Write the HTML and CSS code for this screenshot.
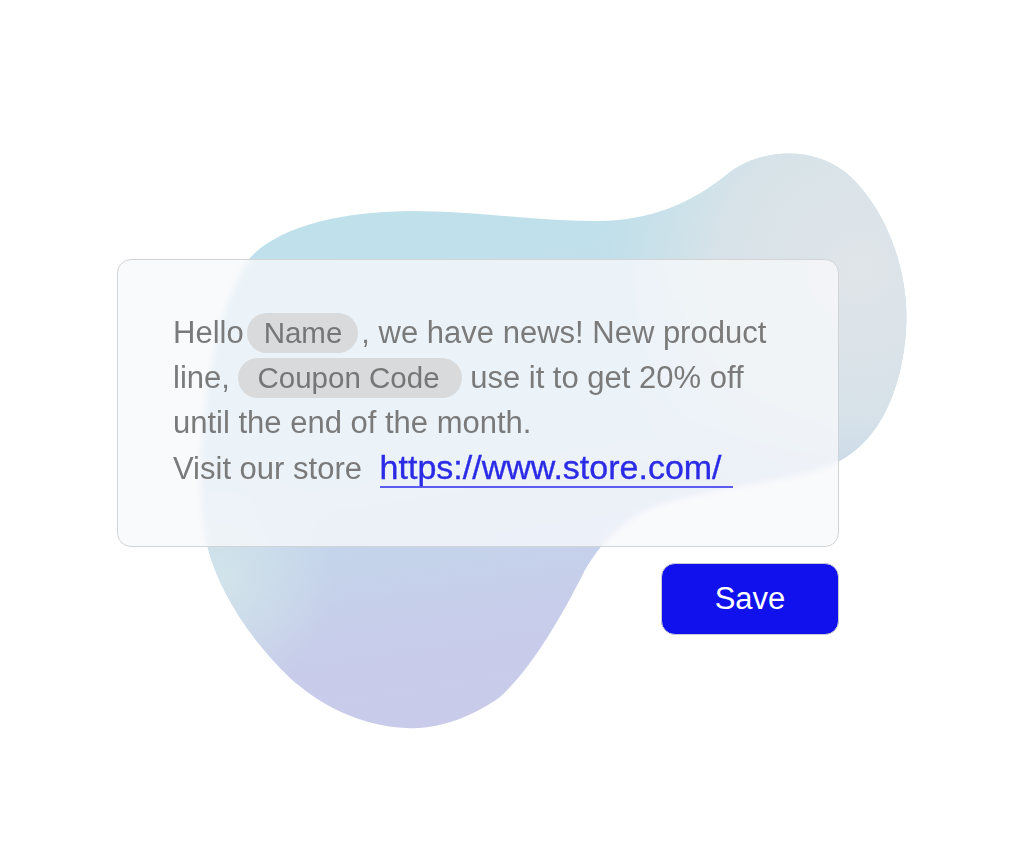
FILE: index.html
```html
<!DOCTYPE html>
<html lang="en">
<head>
<meta charset="utf-8">
<title>Message editor</title>
<link rel="stylesheet" href="styles.css">
</head>
<body>
<div class="stage">
  <svg class="blob" width="1024" height="855" viewBox="0 0 1024 855" aria-hidden="true">
    <defs>
      <linearGradient id="base" x1="0.35" y1="0" x2="0.55" y2="1">
        <stop offset="0" stop-color="#bfe2ea"/>
        <stop offset="0.5" stop-color="#c1dbeb"/>
        <stop offset="0.78" stop-color="#c7cdea"/>
        <stop offset="1" stop-color="#cacaea"/>
      </linearGradient>
      <radialGradient id="lobe" cx="860" cy="270" r="260" gradientUnits="userSpaceOnUse">
        <stop offset="0" stop-color="#e0e5e9" stop-opacity="1"/>
        <stop offset="0.55" stop-color="#dbe3e8" stop-opacity="0.85"/>
        <stop offset="1" stop-color="#d4e3e9" stop-opacity="0"/>
      </radialGradient>
      <radialGradient id="leftlow" cx="215" cy="580" r="120" gradientUnits="userSpaceOnUse">
        <stop offset="0" stop-color="#d2e4ea" stop-opacity="1"/>
        <stop offset="1" stop-color="#d2e4ea" stop-opacity="0"/>
      </radialGradient>
      <path id="shape" d="M 250 258 C 270 235, 320 212, 410 211 C 480 211, 540 222, 600 221 C 650 220, 690 205, 730 172 C 760 150, 810 145, 845 172 C 885 205, 910 270, 906 330 C 902 390, 880 440, 838 462 C 800 482, 720 485, 660 505 C 620 520, 600 545, 585 570 C 560 620, 530 670, 500 697 C 475 715, 440 730, 407 728 C 360 726, 320 705, 290 678 C 250 640, 218 590, 207 545 C 197 500, 200 420, 212 360 C 222 310, 235 280, 250 258 Z"/>
    </defs>
    <use href="#shape" fill="url(#base)"/>
    <use href="#shape" fill="url(#lobe)"/>
    <use href="#shape" fill="url(#leftlow)"/>
  </svg>

  <div class="content">
    <div class="card">
      <p class="msg">Hello<span class="tag tag-name">Name</span>, we have news! New product<br>line, <span class="tag tag-code">Coupon Code</span> use it to get 20% off<br>until the end of the month.<br>Visit our store <a class="link" href="#">https://www.store.com/</a></p>
    </div>
    <button class="save" type="button">Save</button>
  </div>
</div>
</body>
</html>
```

FILE: styles.css
```css
* {
  box-sizing: border-box;
}

html, body {
  margin: 0;
  padding: 0;
  background: #ffffff;
}

body {
  font-family: "Liberation Sans", Arial, sans-serif;
}

.stage {
  position: relative;
  width: 1024px;
  height: 855px;
  overflow: hidden;
}

.blob {
  position: absolute;
  left: 0;
  top: 0;
}

.content {
  position: relative;
  display: flex;
  flex-direction: column;
  align-items: flex-end;
  width: 839px;
  padding: 259px 0 0 117px;
}

.card {
  width: 722px;
  height: 288px;
  border: 1px solid #d2d3d5;
  border-radius: 14px;
  background: rgba(247, 249, 251, 0.78);
  backdrop-filter: blur(3px);
  padding: 50px 20px 0 55px;
}

.msg {
  margin: 0;
  font-size: 31px;
  line-height: 45px;
  color: #7a7a7a;
  white-space: nowrap;
}

.tag {
  display: inline-block;
  height: 40px;
  line-height: 40px;
  font-size: 29.5px;
  border-radius: 20px;
  background: #d8dadb;
  color: #767676;
}

.tag-name {
  margin-left: 3px;
  margin-right: 3px;
  padding: 0 16px 0 17px;
}

.tag-code {
  padding: 0 22px 0 19px;
}

.link {
  display: inline;
  margin-left: 9px;
  padding-right: 11px;
  font-size: 34px;
  color: #2b2be6;
  -webkit-text-stroke: 0.35px #2b2be6;
  text-decoration: none;
  border-bottom: 2px solid #5c5cf0;
}

.save {
  margin-top: 16px;
  width: 178px;
  height: 72px;
  border: 1px solid #c9cad6;
  border-radius: 14px;
  background: #1111ee;
  color: #ffffff;
  font-family: "Liberation Sans", Arial, sans-serif;
  font-size: 31px;
  padding: 0;
  cursor: pointer;
}
```
